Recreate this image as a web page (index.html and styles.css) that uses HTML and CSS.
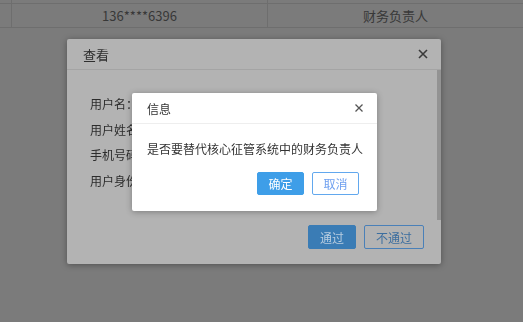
FILE: index.html
```html
<!DOCTYPE html>
<html lang="zh-CN">
<head>
    <meta charset="UTF-8">
    <meta name="viewport" content="width=device-width, initial-scale=1.0">
    <title>用户审核</title>
    <link rel="stylesheet" href="styles.css">
</head>
<body>

    <div class="user-table">
        <div class="row">
            <div class="cell cell-edge"></div>
            <div class="cell"></div>
            <div class="cell"></div>
        </div>
        <div class="row">
            <div class="cell cell-edge"></div>
            <div class="cell">136****6396</div>
            <div class="cell">财务负责人</div>
        </div>
    </div>

    <!-- 查看弹窗 -->
    <div class="view-dialog">
        <div class="dialog-header">
            <span class="dialog-title">查看</span>
            <span class="close-btn">
                <svg width="10" height="10" viewBox="0 0 10 10"><path d="M1 1L9 9M9 1L1 9" stroke="currentColor" stroke-width="1.6" fill="none"/></svg>
            </span>
        </div>
        <div class="dialog-body">
            <div class="field">用户名：</div>
            <div class="field">用户姓名：</div>
            <div class="field">手机号码：</div>
            <div class="field">用户身份：</div>
            <div class="scroll-thumb"></div>
        </div>
        <div class="dialog-footer">
            <button class="btn btn-primary">通过</button>
            <button class="btn btn-plain">不通过</button>
        </div>
    </div>

    <!-- 信息确认框 -->
    <div class="confirm-box">
        <div class="confirm-header">
            <span class="confirm-title">信息</span>
            <span class="close-btn">
                <svg width="10" height="10" viewBox="0 0 10 10"><path d="M1.5 1.5L8.5 8.5M8.5 1.5L1.5 8.5" stroke="currentColor" stroke-width="1.3" fill="none"/></svg>
            </span>
        </div>
        <div class="confirm-body">是否要替代核心征管系统中的财务负责人</div>
        <div class="confirm-footer">
            <button class="btn btn-ok">确定</button>
            <button class="btn btn-cancel">取消</button>
        </div>
    </div>

</body>
</html>
```

FILE: styles.css
```css
body {
    margin: 0;
    background: #7b7b7b;
    font-family: "Noto Sans CJK SC", "Liberation Sans", sans-serif;
    font-size: 12px;
    overflow: hidden;
    height: 322px;
}

.user-table {
    margin-top: -20px;
    margin-left: -244px;
}

.user-table .row {
    display: flex;
    height: 24px;
    border-bottom: 1px solid #6e6e6e;
    box-sizing: border-box;
}

.user-table .cell {
    width: 256px;
    flex-shrink: 0;
    border-right: 1px solid #6e6e6e;
    box-sizing: border-box;
    display: flex;
    align-items: center;
    justify-content: center;
    color: #383838;
    font-size: 13px;
}

.view-dialog {
    position: fixed;
    left: 67px;
    top: 39px;
    width: 374px;
    height: 225px;
    background: #b3b3b3;
    border-radius: 2px;
    box-shadow: 0 1px 6px rgba(0, 0, 0, 0.35);
    display: flex;
    flex-direction: column;
}

.dialog-header {
    height: 30px;
    border-bottom: 1px solid #a4a4a4;
    display: flex;
    align-items: center;
    justify-content: space-between;
    padding: 0 13px 0 16px;
}

.dialog-title {
    font-size: 13px;
    color: #2e2e2e;
}

.close-btn {
    display: flex;
    color: #3a3a3a;
}

.dialog-body {
    position: relative;
    flex: 1;
    padding: 21px 0 0 23px;
}

.field {
    line-height: 25.5px;
    font-size: 12px;
    color: #2c2c2c;
    white-space: nowrap;
}

.scroll-thumb {
    position: absolute;
    right: 0;
    top: 0;
    width: 4px;
    height: 150px;
    background: #939393;
}

.dialog-footer {
    display: flex;
    justify-content: flex-end;
    gap: 8px;
    padding: 0 17px 15px 0;
}

.btn {
    font-family: inherit;
    font-size: 12px;
    border-radius: 2px;
    padding: 0;
    box-sizing: border-box;
    cursor: pointer;
}

.btn-primary {
    width: 48px;
    height: 24px;
    background: #3a7cb5;
    border: 1px solid #3a7cb5;
    color: #b9cde0;
}

.btn-plain {
    width: 60px;
    height: 24px;
    background: #b3b3b3;
    border: 1px solid #4a80b8;
    color: #3c6e9f;
}

.confirm-box {
    position: fixed;
    left: 132px;
    top: 93px;
    width: 245px;
    height: 118px;
    background: #fff;
    border-radius: 2px;
    box-shadow: 0 1px 6px rgba(0, 0, 0, 0.3);
    display: flex;
    flex-direction: column;
}

.confirm-header {
    height: 30px;
    border-bottom: 1px solid #eee;
    display: flex;
    align-items: center;
    justify-content: space-between;
    padding: 0 13px 0 15px;
}

.confirm-title {
    color: #333;
}

.confirm-header .close-btn {
    color: #555;
}

.confirm-body {
    padding: 16px 15px 0;
    line-height: 17px;
    color: #333;
    white-space: nowrap;
}

.confirm-footer {
    margin-top: auto;
    display: flex;
    justify-content: flex-end;
    gap: 8px;
    padding: 0 18px 16px 0;
}

.btn-ok {
    width: 47px;
    height: 23px;
    background: #3e9ee8;
    border: 1px solid #3e9ee8;
    color: #fff;
}

.btn-cancel {
    width: 47px;
    height: 23px;
    background: #fff;
    border: 1px solid #62a8ee;
    color: #6d9ff0;
}
```
